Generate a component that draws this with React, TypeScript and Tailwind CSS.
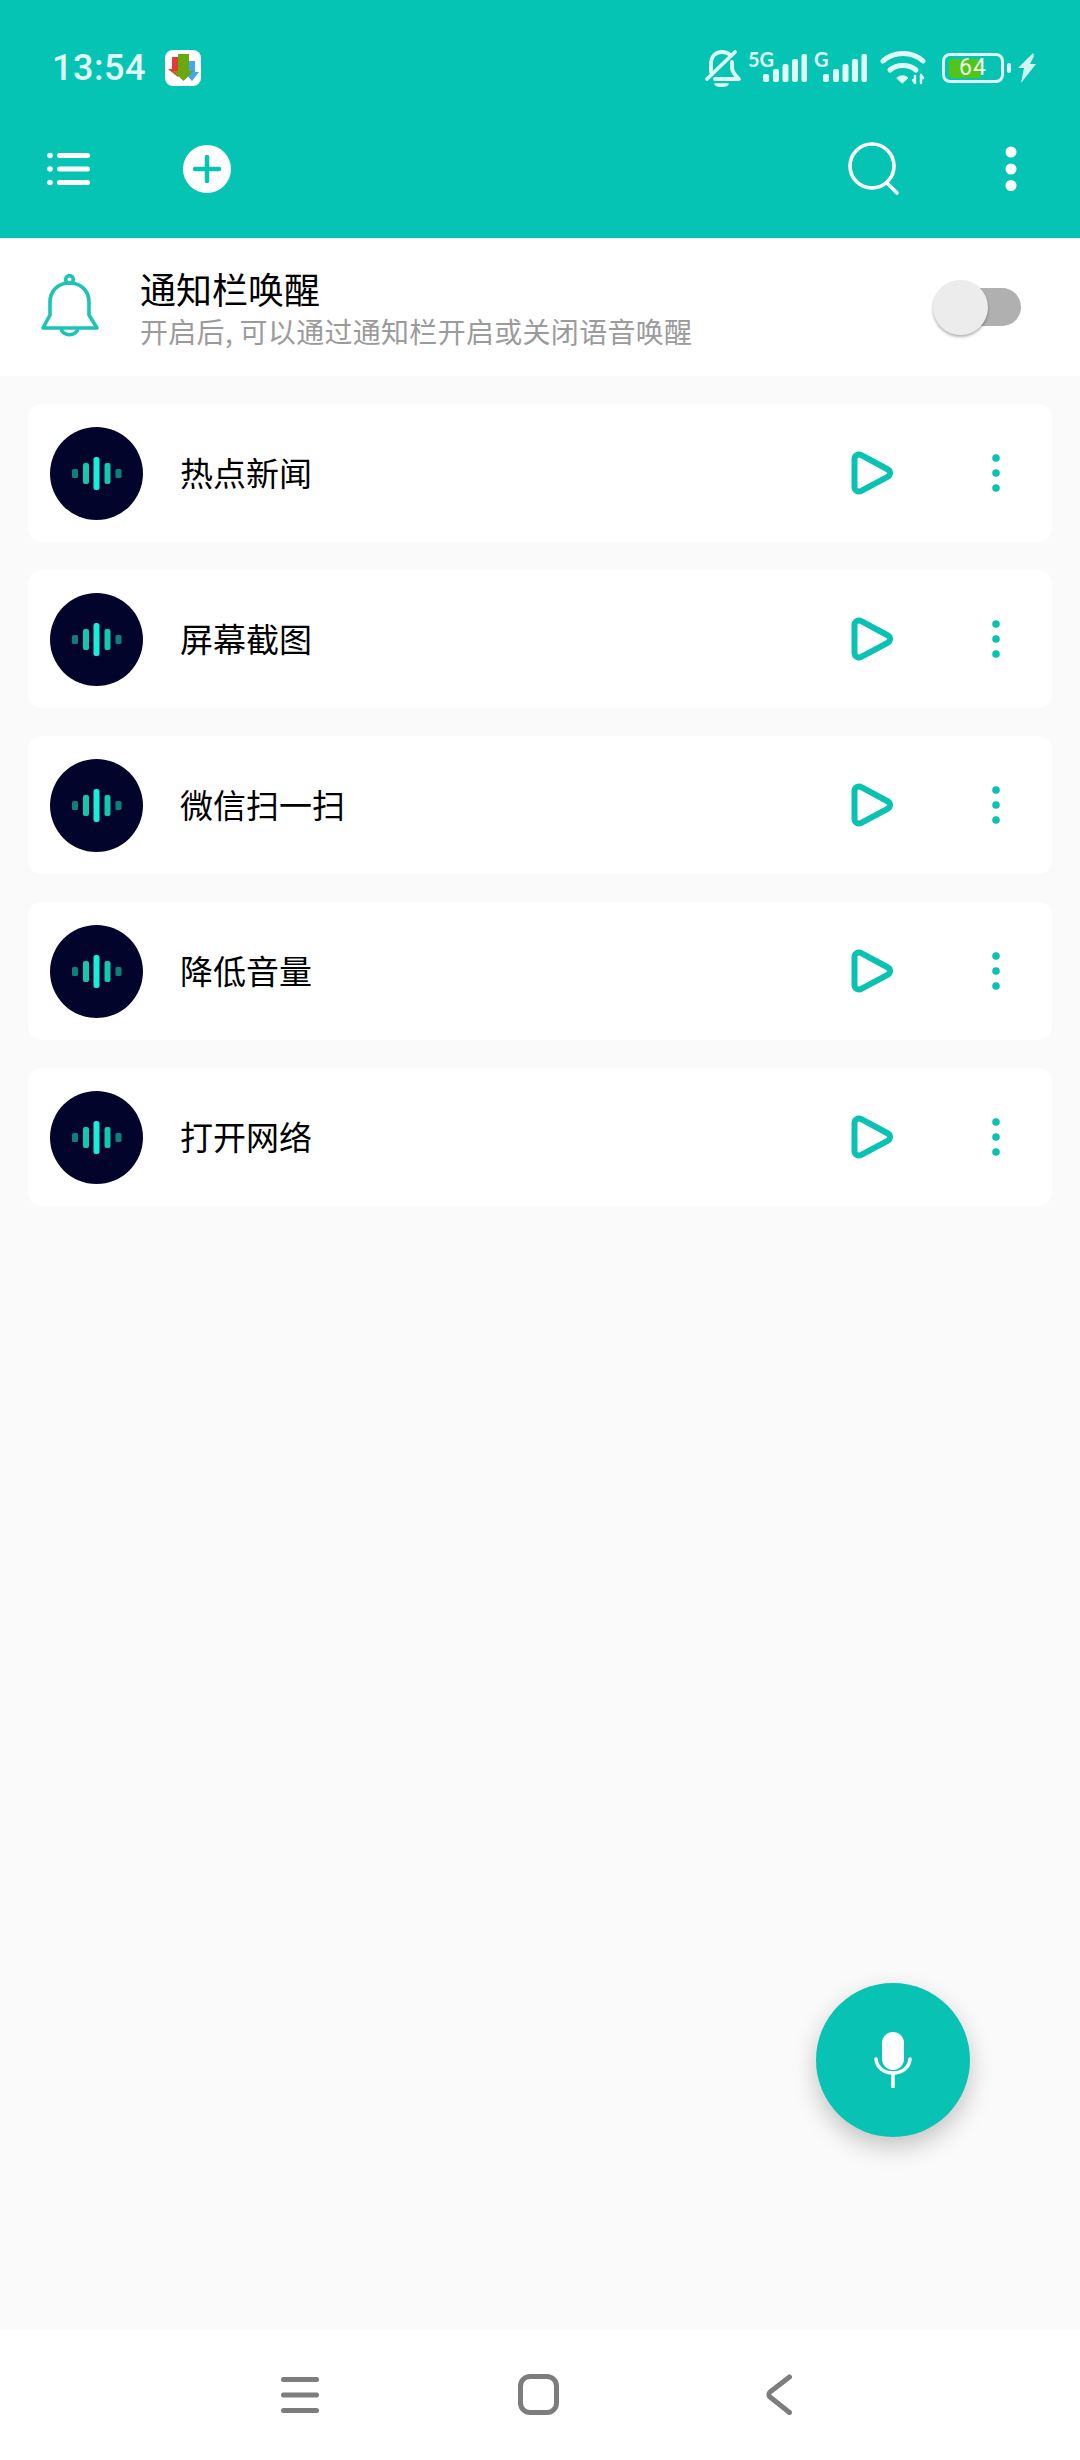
const items = ["热点新闻", "屏幕截图", "微信扫一扫", "降低音量", "打开网络"];

function AppBadge() {
  return (
    <div className="ml-[21px] h-[36px] w-[36px] rounded-[8px] bg-white">
      <svg width="36" height="36" viewBox="0 0 36 36">
        <path d="M7 7h8v12h4l-6 8-10-8h4z" fill="#e53935" />
        <path d="M23 11h7v11h4l-7 9-8-9h4z" fill="#42a5f5" />
        <path d="M13 4h11v17h5L18.500 31 8 21h5z" fill="#6aa80f" />
      </svg>
    </div>
  );
}

function BellOff() {
  return (
    <svg width="38" height="38" viewBox="0 0 38 38" fill="none" stroke="#e0faf6" strokeWidth="3.800" strokeLinecap="round" strokeLinejoin="round">
      <path d="M7 23V15C7 7 12 3 18 3c3 0 6 1 8 3" />
      <path d="M28 13v6c0 4 3 7 7 11H11" />
      <path d="M3 30 31 3" />
      <path d="M11 35h13c-1 3-11 3-13 0z" fill="#e0faf6" strokeWidth="1.500" />
    </svg>
  );
}

function Signal({ label, labelClass }: { label: string; labelClass: string }) {
  return (
    <div className="relative mb-[4px] h-[32px] w-[44px]">
      <span className={`absolute font-['Lato','Liberation_Sans',sans-serif] text-[20px] leading-[20px] font-bold text-[#e0faf6] ${labelClass}`}>{label}</span>
      <svg className="absolute top-0 left-0" width="44" height="32" viewBox="0 0 44 32" fill="#e0faf6">
        <rect x="0" y="24" width="6" height="8" rx="2" />
        <rect x="10" y="19" width="6" height="13" rx="2" />
        <rect x="19.500" y="14" width="6" height="18" rx="2" />
        <rect x="29" y="9" width="6" height="23" rx="2" />
        <rect x="38.500" y="4" width="5.500" height="28" rx="2" />
      </svg>
    </div>
  );
}

function Wifi() {
  return (
    <svg width="46" height="36" viewBox="0 0 46 36" fill="none" stroke="#e0faf6" strokeWidth="5" strokeLinecap="round">
      <path d="M3 11c11-10 29-10 40 0" />
      <path d="M10 20c7-6 19-6 26 0" />
      <path d="M17 28c3-3 8-3 11 0l-5.500 5z" fill="#e0faf6" strokeWidth="1" strokeLinejoin="round" />
      <path d="M35 26v7M33 30l2 3M41 25v8M41 25l2 3" strokeWidth="2.400" />
    </svg>
  );
}

function Battery() {
  return (
    <div className="flex items-center">
      <div className="relative flex h-[30px] w-[62px] items-center rounded-[8px] border-[3px] border-[#e0faf6] pl-[4px]">
        <div className="h-[19px] w-[32px] rounded-l-[3px] bg-[#52c41a]" />
        <span className="absolute top-[-1px] left-[14px] font-['Roboto',sans-serif] text-[23px] leading-[26px] tracking-[1px] text-[#e8fbe8]">64</span>
      </div>
      <div className="ml-[3px] h-[10px] w-[4px] rounded-[2px] bg-[#e0faf6]" />
    </div>
  );
}

function Bolt() {
  return (
    <svg width="18" height="30" viewBox="0 0 18 30" fill="#d2f5ef">
      <path d="M15 0 0 15h6L3 30 18 11h-6l4-8z" />
    </svg>
  );
}

function StatusBar() {
  return (
    <div className="flex h-[88px] items-center pt-[48px] pr-[44px] pl-[52px]">
      <span className="w-[92px] font-['Roboto',sans-serif] text-[36px] leading-[40px] font-medium tracking-[0.500px] text-[#e0faf6]">13:54</span>
      <AppBadge />
      <div className="ml-auto flex items-center">
        <BellOff />
        <div className="ml-[21px]"><Signal label="5G" labelClass="top-[-1px] left-[-15px]" /></div>
        <div className="ml-[16px]"><Signal label="G" labelClass="top-[-1px] left-[-9px]" /></div>
        <div className="ml-[13px]"><Wifi /></div>
        <div className="ml-[16px]"><Battery /></div>
        <div className="ml-[7px]"><Bolt /></div>
      </div>
    </div>
  );
}

function Toolbar() {
  return (
    <div className="flex h-[150px] items-center pt-[12px] pr-[63px] pl-[47px]">
      <svg width="43" height="34" viewBox="0 0 43 34" fill="#fff">
        <circle cx="3" cy="3.500" r="2.800" />
        <circle cx="3" cy="17" r="2.800" />
        <circle cx="3" cy="30.500" r="2.800" />
        <rect x="10" y="1" width="33" height="5" rx="2.500" />
        <rect x="10" y="14.500" width="33" height="5" rx="2.500" />
        <rect x="10" y="28" width="33" height="5" rx="2.500" />
      </svg>
      <svg className="ml-[93px]" width="48" height="48" viewBox="0 0 48 48">
        <circle cx="24" cy="24" r="24" fill="#fff" />
        <path d="M24 12v24M12 24h24" stroke="#06c4b4" strokeWidth="4.500" strokeLinecap="round" />
      </svg>
      <svg className="ml-auto" width="52" height="54" viewBox="0 0 52 54" fill="none" stroke="#fff" strokeWidth="3.600" strokeLinecap="round">
        <circle cx="24" cy="24" r="22" />
        <path d="M39 41l10 10" />
      </svg>
      <svg className="ml-[105px]" width="12" height="46" viewBox="0 0 12 46" fill="#fff">
        <circle cx="6" cy="6" r="5.500" />
        <circle cx="6" cy="23" r="5.500" />
        <circle cx="6" cy="39.500" r="5.500" />
      </svg>
    </div>
  );
}

function NotificationRow() {
  return (
    <div className="flex h-[138px] items-center bg-white pl-[41px]">
      <svg width="58" height="66" viewBox="0 0 58 66" fill="none" stroke="#1cc4b4" strokeWidth="3.600" strokeLinejoin="round">
        <circle cx="28.500" cy="5.500" r="3.800" />
        <path d="M9 41V28C9 17 17 9 28.500 9S48 17 48 28v13l8 13H2z" />
        <path d="M20 54c1 9 16 9 17 0" />
      </svg>
      <div className="ml-[41px] flex flex-col">
        <span className="font-['Noto_Sans_CJK_SC',sans-serif] text-[36px] leading-[42px] text-black">通知栏唤醒</span>
        <span className="mt-[5px] font-['Noto_Sans_CJK_SC',sans-serif] text-[28px] leading-[34px] tracking-[0.300px] text-[#9b9b9b]">开启后, 可以通过通知栏开启或关闭语音唤醒</span>
      </div>
      <div className="relative mr-[59px] ml-auto h-[38px] w-[66px] rounded-full bg-[#b0b0b0]">
        <div className="absolute top-[-8px] left-[-22px] h-[55px] w-[55px] rounded-full bg-[#ececec] shadow-[0_2px_3px_rgba(0,0,0,0.3)]" />
      </div>
    </div>
  );
}

function Avatar() {
  return (
    <div className="h-[93px] w-[93px] shrink-0 rounded-full bg-[#02042c]">
      <svg width="93" height="93" viewBox="0 0 93 93">
        <rect x="22" y="42" width="6" height="9" rx="1.500" fill="#0b8078" />
        <rect x="33" y="36" width="6" height="21" rx="2" fill="#12c8b0" />
        <rect x="43.500" y="30" width="6" height="33" rx="2.500" fill="#14f0da" />
        <rect x="54.500" y="36" width="6" height="21" rx="2" fill="#12c8b0" />
        <rect x="65.500" y="42" width="6" height="9" rx="1.500" fill="#0b8078" />
      </svg>
    </div>
  );
}

function VoiceCard({ name }: { name: string }) {
  return (
    <div className="flex h-[138px] items-center rounded-[14px] bg-white pl-[22px]">
      <Avatar />
      <span className="mb-[3px] ml-[37px] font-['Noto_Sans_CJK_SC',sans-serif] text-[33px] leading-[40px] text-black">{name}</span>
      <svg className="ml-auto" width="42" height="44" viewBox="0 0 42 44" fill="none" stroke="#0ac2b2" strokeWidth="6" strokeLinejoin="round">
        <path d="M3.500 8a4.500 4.500 0 0 1 6.800-3.900L37 18.500a4 4 0 0 1 0 7L10.300 39.900A4.500 4.500 0 0 1 3.500 36z" />
      </svg>
      <svg className="mr-[52px] ml-[99px]" width="8" height="38" viewBox="0 0 8 38" fill="#0ac2b2">
        <circle cx="4" cy="4" r="3.800" />
        <circle cx="4" cy="19" r="3.800" />
        <circle cx="4" cy="34" r="3.800" />
      </svg>
    </div>
  );
}

function BottomNav() {
  return (
    <div className="flex h-[130px] items-start bg-white pt-[44px] pl-[281px]">
      <svg className="mt-[3px]" width="38" height="36" viewBox="0 0 38 36" fill="#7d7d7d">
        <rect x="0" y="0" width="38" height="5" rx="2.500" />
        <rect x="0" y="15.500" width="38" height="5" rx="2.500" />
        <rect x="0" y="31" width="38" height="5" rx="2.500" />
      </svg>
      <div className="ml-[199px] h-[41px] w-[41px] rounded-[12px] border-[5px] border-[#7d7d7d]" />
      <svg className="ml-[207px]" width="26" height="41" viewBox="0 0 26 41" fill="none" stroke="#7d7d7d" strokeWidth="5" strokeLinecap="round" strokeLinejoin="round">
        <path d="M23.500 3 4 18c-1.500 1.500-1.500 3.500 0 5l19.500 15.500" />
      </svg>
    </div>
  );
}

export default function App() {
  return (
    <div className="flex h-[2460px] w-[1080px] flex-col overflow-hidden bg-[#fafafa]">
      <header className="h-[238px] bg-[#06c4b4]">
        <StatusBar />
        <Toolbar />
      </header>
      <NotificationRow />
      <main className="relative flex-1">
        <div className="flex flex-col gap-[28px] px-[28px] pt-[28px]">
          {items.map((name) => (
            <VoiceCard key={name} name={name} />
          ))}
        </div>
        <button className="absolute top-[1607px] left-[816px] flex h-[154px] w-[154px] items-center justify-center rounded-full bg-[#08c3b3] shadow-[0_10px_24px_rgba(0,0,0,0.22)]">
          <svg width="38" height="56" viewBox="0 0 38 56" fill="none" stroke="#fff" strokeWidth="3.500" strokeLinecap="round">
            <rect x="8" y="0" width="22" height="38" rx="11" fill="#fff" stroke="none" />
            <path d="M2 27c1 9 8 14 17 14s16-5 17-14" />
            <path d="M19 41v14" />
          </svg>
        </button>
      </main>
      <BottomNav />
    </div>
  );
}
